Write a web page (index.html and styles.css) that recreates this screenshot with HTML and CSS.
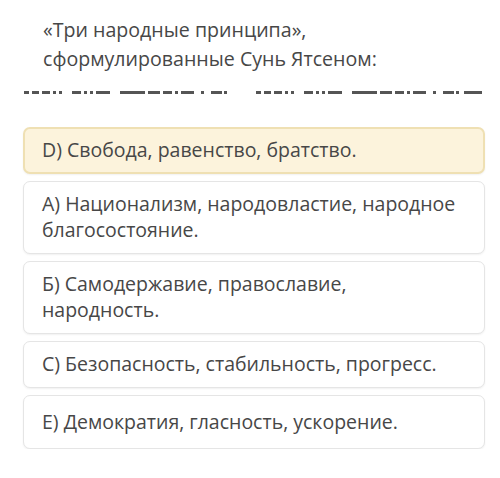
FILE: index.html
```html
<!DOCTYPE html>
<html lang="ru">
<head>
    <meta charset="UTF-8">
    <title>Вопрос</title>
    <link rel="stylesheet" href="styles.css">
</head>
<body>
    <div class="quiz">
        <p class="question">«Три народные принципа», сформулированные Сунь Ятсеном:</p>

        <div class="blank">
            <svg width="460" height="4" viewBox="0 0 460 4">
                <g fill="#555">
                    <rect x="0" y="0" width="5" height="3"/><rect x="8" y="0" width="7" height="3"/>
                    <rect x="18" y="0" width="8" height="3"/><rect x="29" y="0" width="3" height="3"/>
                    <rect x="35" y="0" width="3" height="3"/><rect x="48" y="0" width="9" height="3"/>
                    <rect x="60" y="0" width="3" height="3"/><rect x="66" y="0" width="3" height="3"/>
                    <rect x="72" y="0" width="14" height="3"/><rect x="96" y="0" width="25" height="3"/>
                    <rect x="124" y="0" width="12" height="3"/><rect x="139" y="0" width="9" height="3"/>
                    <rect x="151" y="0" width="3" height="3"/><rect x="157" y="0" width="13" height="3"/>
                    <rect x="177" y="0" width="3" height="3"/><rect x="187" y="0" width="11" height="3"/>
                    <rect x="200" y="0" width="3" height="3"/>
                    <rect x="232" y="0" width="5" height="3"/><rect x="240" y="0" width="7" height="3"/>
                    <rect x="250" y="0" width="8" height="3"/><rect x="261" y="0" width="3" height="3"/>
                    <rect x="267" y="0" width="3" height="3"/><rect x="280" y="0" width="9" height="3"/>
                    <rect x="292" y="0" width="3" height="3"/><rect x="298" y="0" width="3" height="3"/>
                    <rect x="304" y="0" width="14" height="3"/><rect x="328" y="0" width="25" height="3"/>
                    <rect x="356" y="0" width="12" height="3"/><rect x="371" y="0" width="9" height="3"/>
                    <rect x="383" y="0" width="3" height="3"/><rect x="389" y="0" width="13" height="3"/>
                    <rect x="409" y="0" width="3" height="3"/><rect x="419" y="0" width="11" height="3"/>
                    <rect x="432" y="0" width="3" height="3"/><rect x="440" y="0" width="18" height="3"/>
                </g>
            </svg>
        </div>

        <div class="answers">
            <div class="answer selected">D) Свобода, равенство, братство.</div>
            <div class="answer">A) Национализм, народовластие, народное благосостояние.</div>
            <div class="answer">Б) Самодержавие, православие, народность.</div>
            <div class="answer">C) Безопасность, стабильность, прогресс.</div>
            <div class="answer tall">E) Демократия, гласность, ускорение.</div>
        </div>
    </div>
</body>
</html>
```

FILE: styles.css
```css
* {
    box-sizing: border-box;
    margin: 0;
    padding: 0;
}

body {
    font-family: "Open Sans", "Noto Sans", sans-serif;
    color: #474747;
    background: white;
}

.quiz {
    width: 462px;
    margin-left: 23px;
}

.question {
    font-size: 19.6px;
    line-height: 29px;
    padding: 15px 0 0 20px;
    width: 420px;
}

.blank {
    height: 4px;
    margin: 16px 0 0 1px;
    line-height: 0;
}

.answers {
    display: flex;
    flex-direction: column;
    gap: 7px;
    margin-top: 34px;
}

.answer {
    background: white;
    border: 1px solid #e5e5e5;
    border-radius: 7px;
    padding: 9px 28px 10px 18px;
    font-size: 19.5px;
    line-height: 26px;
    box-shadow: 0 1px 2px rgba(0, 0, 0, 0.06);
}

.answer.selected {
    background: #fcf3dc;
    border: 2px solid #efe0b3;
    padding: 8px 27px 9px 17px;
}

.answer.tall {
    padding-top: 13px;
    padding-bottom: 13px;
}
```
